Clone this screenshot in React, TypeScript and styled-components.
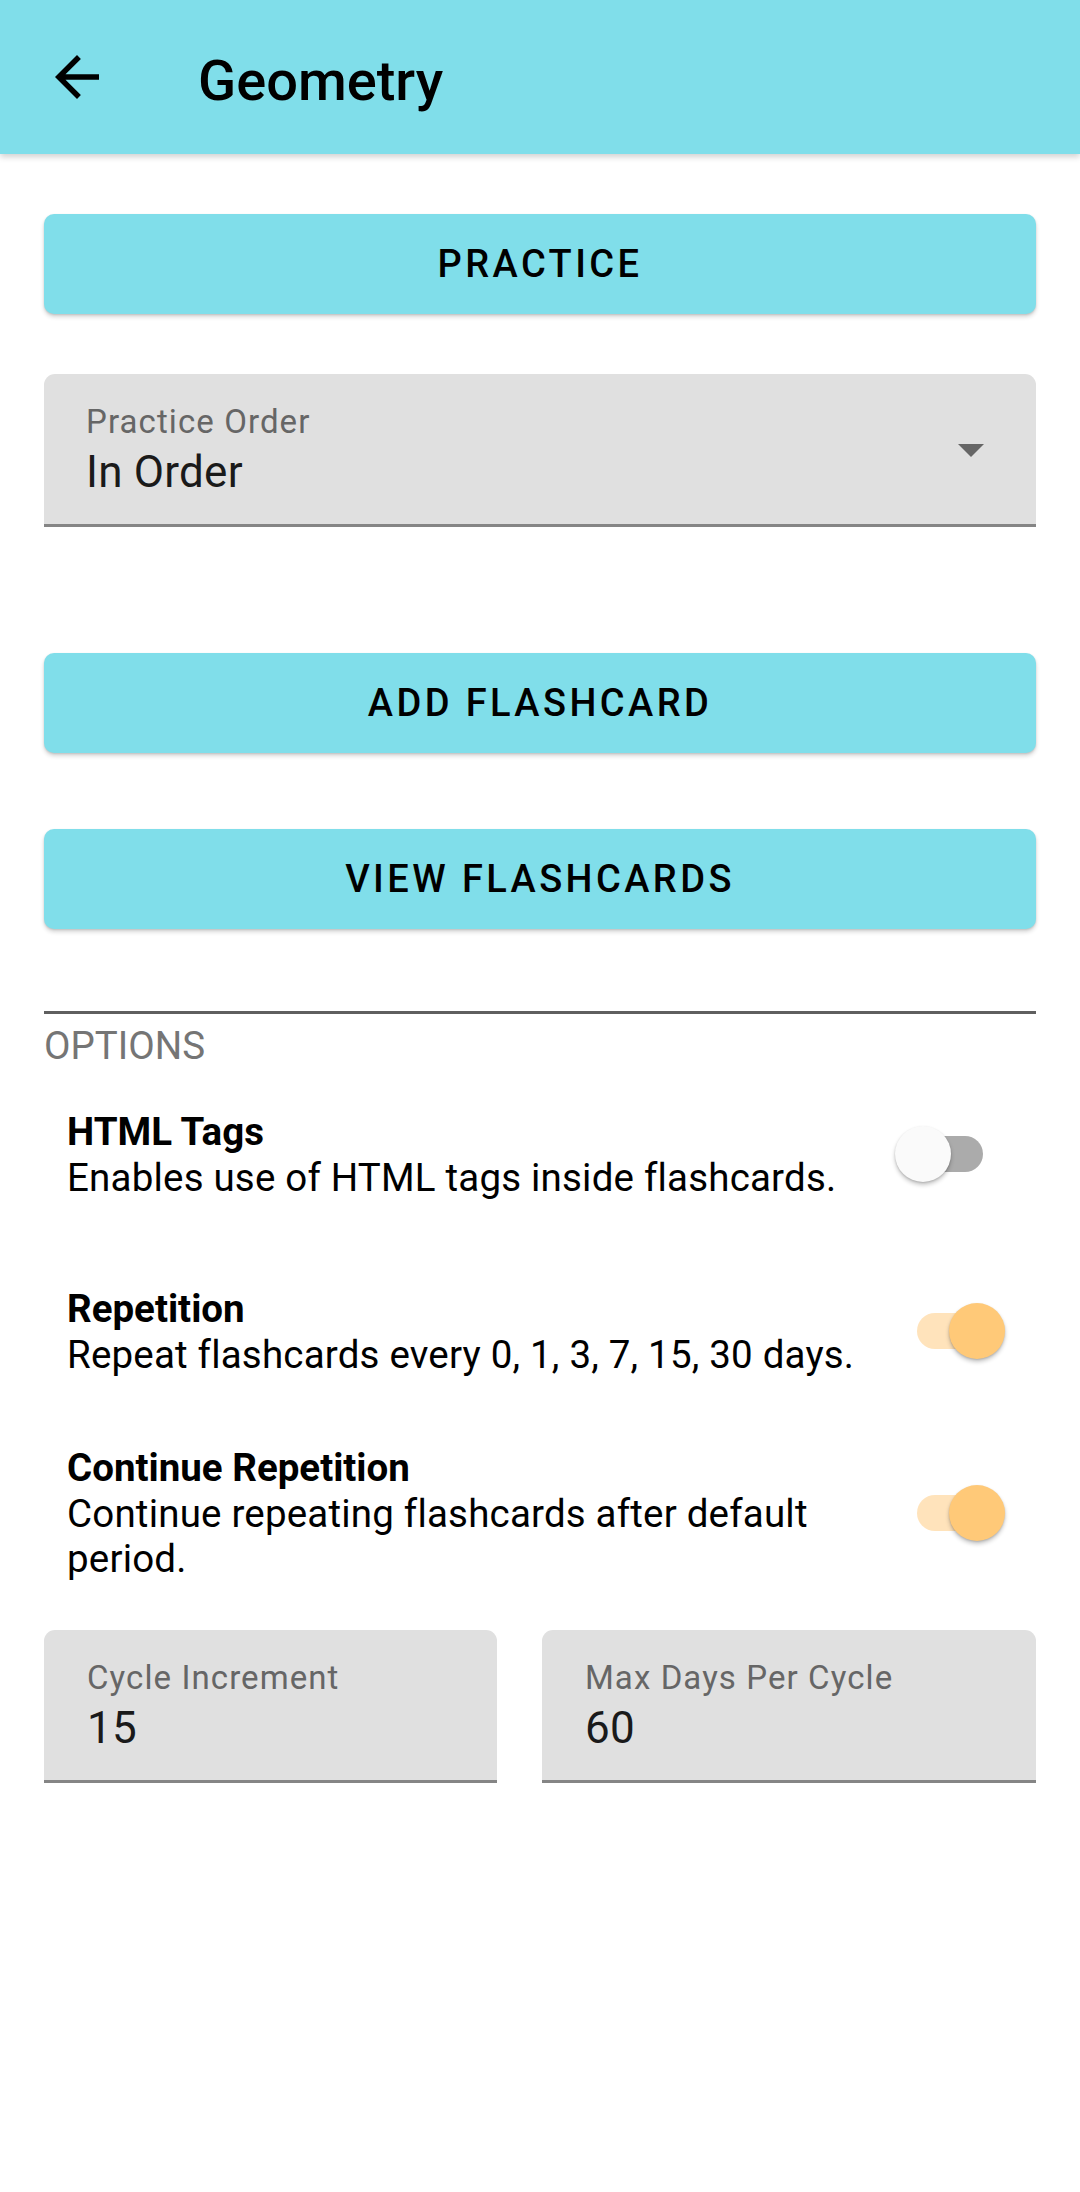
import styled, { createGlobalStyle } from "styled-components";

const GlobalStyle = createGlobalStyle`
  body {
    margin: 0;
    background: #ffffff;
    font-family: Roboto, "Noto Sans", "Liberation Sans", sans-serif;
    color: #000000;
  }
`;

const Page = styled.div`
  width: 1080px;
  min-height: 2192px;
  background: #ffffff;
`;

const AppBar = styled.header`
  height: 154px;
  background: #80deea;
  display: flex;
  align-items: center;
  padding-left: 44px;
  box-shadow: 0 3px 6px rgba(0, 0, 0, 0.18);
  position: relative;
  z-index: 1;
`;

const BackIcon = styled.svg`
  width: 66px;
  height: 66px;
  flex: none;
`;

const Title = styled.h1`
  margin: 8px 0 0 88px;
  font-size: 56px;
  font-weight: 500;
  line-height: 1;
`;

const Content = styled.main`
  padding: 60px 44px 0;
  display: flex;
  flex-direction: column;
`;

const Button = styled.button<{ $top?: number }>`
  height: 100px;
  margin-top: ${(p) => p.$top ?? 0}px;
  border: none;
  border-radius: 10px;
  background: #80deea;
  box-shadow: 0 3px 4px rgba(0, 0, 0, 0.16), 0 1px 2px rgba(0, 0, 0, 0.12);
  font-family: Roboto, sans-serif;
  font-size: 38px;
  font-weight: 500;
  letter-spacing: 0.09em;
  color: #000000;
  text-transform: uppercase;
`;

const Field = styled.div<{ $top?: number; $pad?: number }>`
  margin-top: ${(p) => p.$top ?? 0}px;
  height: 150px;
  box-sizing: content-box;
  background: #e0e0e0;
  border-radius: 11px 11px 0 0;
  border-bottom: 3px solid #858585;
  padding: 0 52px 0 ${(p) => p.$pad ?? 42}px;
  display: flex;
  align-items: center;
`;

const FieldText = styled.div`
  flex: 1;
  align-self: flex-start;
  padding-top: 29px;
  display: flex;
  flex-direction: column;
  gap: 5px;
`;

const FieldLabel = styled.span`
  font-size: 33px;
  line-height: 38px;
  color: #666666;
  letter-spacing: 0.033em;
`;

const FieldValue = styled.span`
  font-size: 44px;
  line-height: 52px;
  color: #1a1a1a;
  letter-spacing: 0.005em;
`;

const DropArrow = styled.span`
  width: 0;
  height: 0;
  border-left: 13.5px solid transparent;
  border-right: 13.5px solid transparent;
  border-top: 13px solid #666666;
  margin-top: 2px;
`;

const Divider = styled.hr`
  margin: 82px 0 0;
  height: 3px;
  border: none;
  background: #5f5f5f;
`;

const SectionLabel = styled.div`
  font-size: 38.5px;
  line-height: 45px;
  margin-top: 9px;
  color: #757575;
  text-transform: uppercase;
`;

const OptionRow = styled.div<{ $right: number; $h: number }>`
  height: ${(p) => p.$h}px;
  display: flex;
  align-items: center;
  gap: 30px;
  padding: 0 ${(p) => p.$right}px 0 23px;
`;

const OptionText = styled.div`
  flex: 1;
  display: flex;
  flex-direction: column;
`;

const OptionTitle = styled.span`
  font-size: 38.5px;
  line-height: 46px;
  font-weight: 700;
`;

const OptionDesc = styled.span`
  font-size: 38.5px;
  line-height: 45px;
  letter-spacing: 0.005em;
`;

const SwitchBox = styled.div`
  position: relative;
  width: 96px;
  height: 56px;
  flex: none;
  display: flex;
  align-items: center;
`;

const Track = styled.div<{ $on: boolean }>`
  margin: 0 8px;
  width: 80px;
  height: 36px;
  border-radius: 18px;
  background: ${(p) => (p.$on ? "#ffe3bb" : "#ababab")};
`;

const Thumb = styled.div<{ $on: boolean }>`
  position: absolute;
  top: 0;
  ${(p) => (p.$on ? "right: 0;" : "left: 0;")}
  width: 56px;
  height: 56px;
  border-radius: 50%;
  background: ${(p) => (p.$on ? "#ffc978" : "#fafafa")};
  box-shadow: 0 3px 4px rgba(0, 0, 0, 0.22), 0 1px 2px rgba(0, 0, 0, 0.14);
`;

const FieldGrid = styled.div`
  display: grid;
  grid-template-columns: 452fr 493fr;
  column-gap: 45px;
  margin-top: 26px;
`;

function Switch({ on }: { on: boolean }) {
  return (
    <SwitchBox>
      <Track $on={on} />
      <Thumb $on={on} />
    </SwitchBox>
  );
}

const options = [
  { title: "HTML Tags", desc: "Enables use of HTML tags inside flashcards.", on: false, h: 172 },
  { title: "Repetition", desc: "Repeat flashcards every 0, 1, 3, 7, 15, 30 days.", on: true, h: 182 },
  { title: "Continue Repetition", desc: "Continue repeating flashcards after default period.", on: true, h: 182 },
];

export default function App() {
  return (
    <Page>
      <GlobalStyle />
      <AppBar>
        <BackIcon viewBox="0 0 24 24">
          <path d="M20 11H7.83l5.59-5.59L12 4l-8 8 8 8 1.41-1.41L7.83 13H20v-2z" fill="#000" />
        </BackIcon>
        <Title>Geometry</Title>
      </AppBar>
      <Content>
        <Button>Practice</Button>
        <Field $top={60}>
          <FieldText>
            <FieldLabel>Practice Order</FieldLabel>
            <FieldValue>In Order</FieldValue>
          </FieldText>
          <DropArrow />
        </Field>
        <Button $top={126}>Add Flashcard</Button>
        <Button $top={76}>View Flashcards</Button>
        <Divider />
        <SectionLabel>Options</SectionLabel>
        {options.map((o) => (
          <OptionRow key={o.title} $right={o.on ? 31 : 45} $h={o.h}>
            <OptionText>
              <OptionTitle>{o.title}</OptionTitle>
              <OptionDesc>{o.desc}</OptionDesc>
            </OptionText>
            <Switch on={o.on} />
          </OptionRow>
        ))}
        <FieldGrid>
          <Field $pad={43}>
            <FieldText>
              <FieldLabel>Cycle Increment</FieldLabel>
              <FieldValue>15</FieldValue>
            </FieldText>
          </Field>
          <Field $pad={43}>
            <FieldText>
              <FieldLabel>Max Days Per Cycle</FieldLabel>
              <FieldValue>60</FieldValue>
            </FieldText>
          </Field>
        </FieldGrid>
      </Content>
    </Page>
  );
}
